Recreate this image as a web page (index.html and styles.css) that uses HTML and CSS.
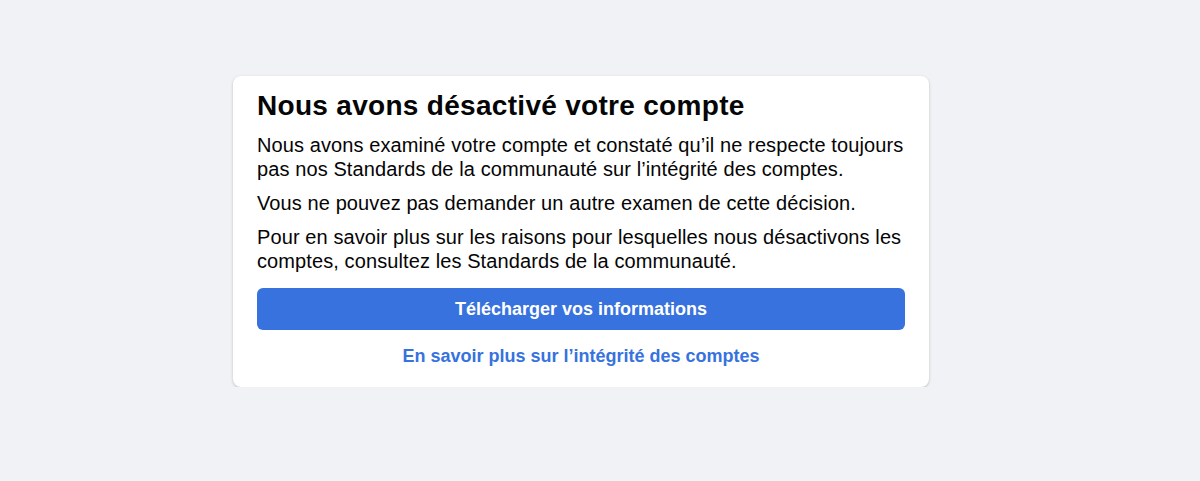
FILE: index.html
```html
<!DOCTYPE html>
<html lang="fr">
<head>
<meta charset="utf-8">
<title>Compte désactivé</title>
<link rel="stylesheet" href="styles.css">
</head>
<body>
<main class="page">
  <section class="card">
    <h1 class="title">Nous avons désactivé votre compte</h1>
    <p class="text">Nous avons examiné votre compte et constaté qu’il ne respecte toujours pas nos Standards de la communauté sur l’intégrité des comptes.</p>
    <p class="text">Vous ne pouvez pas demander un autre examen de cette décision.</p>
    <p class="text">Pour en savoir plus sur les raisons pour lesquelles nous désactivons les comptes, consultez les Standards de la communauté.</p>
    <div class="actions">
      <button class="btn" type="button">Télécharger vos informations</button>
      <a class="link" href="#">En savoir plus sur l’intégrité des comptes</a>
    </div>
  </section>
</main>
</body>
</html>
```
FILE: styles.css
```css
html, body {
  margin: 0;
  padding: 0;
  background: #f0f2f5;
  font-family: "Liberation Sans", Arial, Helvetica, sans-serif;
  color: #050505;
}
.page {
  padding: 76px 0 0 233px;
}
.card {
  box-sizing: border-box;
  width: 696px;
  background: #ffffff;
  border-radius: 8px;
  box-shadow: 0 1px 3px rgba(0, 0, 0, 0.22);
  padding: 14px 24px 19px;
}
.title {
  margin: 0 0 11px;
  font-size: 28px;
  line-height: 32px;
  font-weight: 700;
  letter-spacing: 0.3px;
}
.text {
  margin: 0 0 10px;
  font-size: 20px;
  line-height: 24px;
  letter-spacing: 0.1px;
}
.actions {
  display: flex;
  flex-direction: column;
  align-items: center;
  gap: 14px;
  padding-top: 5px;
}
.btn {
  width: 100%;
  height: 42px;
  border: 0;
  border-radius: 6px;
  background: #3772de;
  color: #ffffff;
  font-family: inherit;
  font-size: 18px;
  font-weight: 700;
}
.link {
  color: #3772de;
  font-size: 18px;
  font-weight: 700;
  text-decoration: none;
  line-height: 24px;
}
```
